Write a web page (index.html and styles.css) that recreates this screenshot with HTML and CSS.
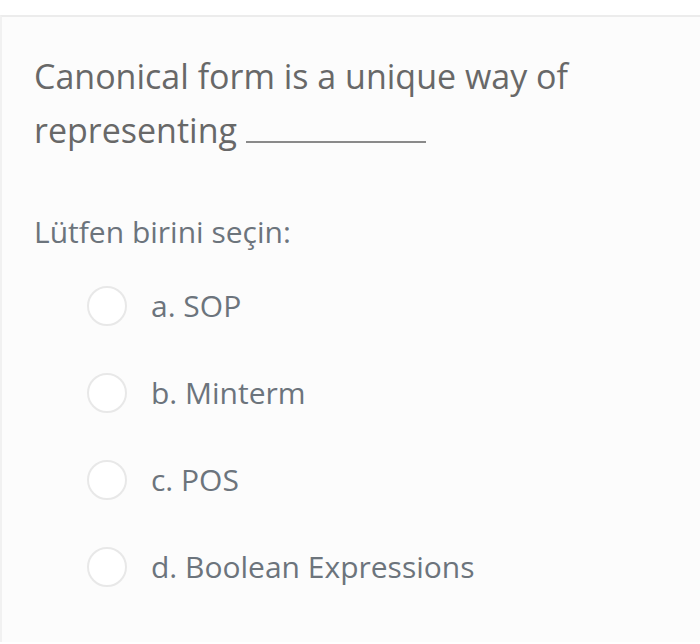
FILE: index.html
```html
<!DOCTYPE html>
<html lang="tr">
<head>
<meta charset="utf-8">
<link rel="stylesheet" href="styles.css">
</head>
<body>
<div class="card">
  <div class="qtext">Canonical form is a unique way of representing <span class="blank"></span></div>
  <div class="prompt">Lütfen birini seçin:</div>
  <div class="answers">
    <label class="opt"><span class="radio"></span><span class="label">a. SOP</span></label>
    <label class="opt"><span class="radio"></span><span class="label">b. Minterm</span></label>
    <label class="opt"><span class="radio"></span><span class="label">c. POS</span></label>
    <label class="opt"><span class="radio"></span><span class="label">d. Boolean Expressions</span></label>
  </div>
</div>
</body>
</html>
```
FILE: styles.css
```css
html, body {
  margin: 0;
  padding: 0;
  background: #ffffff;
}
body {
  font-family: "Open Sans", "Liberation Sans", sans-serif;
  height: 644px;
  overflow: hidden;
}
.card {
  margin-top: 15px;
  border-top: 2px solid #ececec;
  border-left: 2px solid #f1f1f1;
  background: #fcfcfc;
  height: 627px;
  box-sizing: border-box;
  padding: 32px 0 0 32px;
}
.qtext {
  font-size: 34px;
  line-height: 54px;
  color: #686868;
  width: 600px;
}
.blank {
  display: inline-block;
  width: 180px;
  height: 2px;
  background: #8a8a8a;
  vertical-align: baseline;
  margin-left: 0;
}
.prompt {
  margin-top: 55px;
  font-size: 30px;
  line-height: 40px;
  color: #6c747c;
}
.answers {
  margin-top: 34px;
  padding-left: 53px;
  display: flex;
  flex-direction: column;
  gap: 47px;
}
.opt {
  display: flex;
  align-items: center;
  gap: 24px;
}
.radio {
  width: 40px;
  height: 40px;
  border: 2px solid #e8e8e8;
  border-radius: 50%;
  box-sizing: border-box;
  background: #fff;
  flex: none;
}
.label {
  font-size: 30px;
  line-height: 40px;
  color: #6c747c;
}
```
